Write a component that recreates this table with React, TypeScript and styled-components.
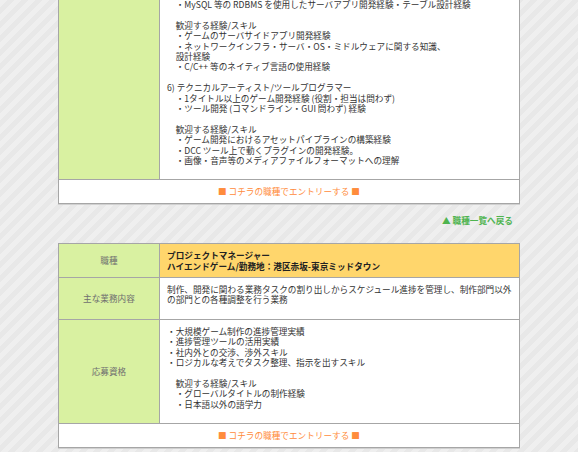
import React from "react";
import styled, { createGlobalStyle } from "styled-components";

const GlobalStyle = createGlobalStyle`
  html, body {
    margin: 0;
    padding: 0;
  }
  body {
    font-family: "Noto Sans CJK JP", "Noto Sans", sans-serif;
    font-size: 8.65px;
    line-height: 10.4px;
    color: #333;
    background-color: #ececec;
    background-image: repeating-linear-gradient(
      135deg,
      #efefef 0px,
      #efefef 5px,
      #e8e8e8 5px,
      #e8e8e8 10px
    );
    min-height: 452px;
    overflow: hidden;
  }
`;

const Page = styled.div`
  width: 462px;
  margin: -8px auto 0;
`;

const JobTable = styled.table`
  width: 462px;
  border-collapse: collapse;
  table-layout: fixed;
  background: #fff;
  border: 1px solid #a6a6a6;
  box-shadow: 0 1px 0 #d0d0d0;
`;

const LabelCol = styled.col`
  width: 101px;
`;

const LabelCell = styled.th`
  background: #d9f1a1;
  color: #707070;
  font-weight: normal;
  text-align: center;
  vertical-align: middle;
  border: 1px solid #a6a6a6;
  padding: 6px 4px;
`;

const ValueCell = styled.td<{ $head?: boolean }>`
  background: ${(p) => (p.$head ? "#ffd66c" : "#fff")};
  color: ${(p) => (p.$head ? "#222" : "#333")};
  font-weight: ${(p) => (p.$head ? "bold" : "normal")};
  border: 1px solid #a6a6a6;
  padding: ${(p) => (p.$head ? "6px 7px" : "6px 7px 14px")};
  vertical-align: top;
  text-align: left;
`;

const EntryCell = styled.td`
  border: 1px solid #a6a6a6;
  padding: 6px 7px;
  text-align: center;
  background: #fff;
`;

const EntryLink = styled.a`
  color: #ff8c3c;
  text-decoration: none;
  cursor: pointer;
`;

const Line = styled.div<{ $indent?: boolean }>`
  padding-left: ${(p) => (p.$indent ? "8.65px" : "0")};
  white-space: nowrap;
`;

const Blank = styled.div`
  height: 10.4px;
`;

const BackRow = styled.div`
  text-align: right;
  padding: 11px 7px 18px;
`;

const BackLink = styled.a`
  color: #4fb44f;
  font-weight: bold;
  text-decoration: none;
  cursor: pointer;
`;

type L = { t: string; i?: boolean } | null;

const firstLines: L[] = [
  { t: "・MySQL 等の RDBMS を使用したサーバアプリ開発経験・テーブル設計経験", i: true },
  null,
  { t: "歓迎する経験/スキル", i: true },
  { t: "・ゲームのサーバサイドアプリ開発経験", i: true },
  { t: "・ネットワークインフラ・サーバ・OS・ミドルウェアに関する知識、", i: true },
  { t: "設計経験", i: true },
  { t: "・C/C++ 等のネイティブ言語の使用経験", i: true },
  null,
  { t: "6) テクニカルアーティスト/ツールプログラマー" },
  { t: "・1タイトル以上のゲーム開発経験 (役割・担当は問わず)", i: true },
  { t: "・ツール開発 (コマンドライン・GUI 問わず) 経験", i: true },
  null,
  { t: "歓迎する経験/スキル", i: true },
  { t: "・ゲーム開発におけるアセットパイプラインの構築経験", i: true },
  { t: "・DCC ツール上で動くプラグインの開発経験。", i: true },
  { t: "・画像・音声等のメディアファイルフォーマットへの理解", i: true },
];

const pmLines: L[] = [
  { t: "・大規模ゲーム制作の進捗管理実績" },
  { t: "・進捗管理ツールの活用実績" },
  { t: "・社内外との交渉、渉外スキル" },
  { t: "・ロジカルな考えでタスク整理、指示を出すスキル" },
  null,
  { t: "歓迎する経験/スキル", i: true },
  { t: "・グローバルタイトルの制作経験", i: true },
  { t: "・日本語以外の語学力", i: true },
];

const Lines = ({ lines }: { lines: L[] }) => (
  <>
    {lines.map((l, k) =>
      l ? (
        <Line key={k} $indent={l.i}>
          {l.t}
        </Line>
      ) : (
        <Blank key={k} />
      )
    )}
  </>
);

const EntryRow = () => (
  <tr>
    <EntryCell colSpan={2}>
      <EntryLink>■ コチラの職種でエントリーする ■</EntryLink>
    </EntryCell>
  </tr>
);

const Cols = () => (
  <colgroup>
    <LabelCol />
    <col />
  </colgroup>
);

export default function App() {
  return (
    <>
      <GlobalStyle />
      <Page>
        <JobTable>
          <Cols />
          <tbody>
            <tr>
              <LabelCell aria-hidden="true" />
              <ValueCell>
                <Lines lines={firstLines} />
              </ValueCell>
            </tr>
            <EntryRow />
          </tbody>
        </JobTable>

        <BackRow>
          <BackLink>▲ 職種一覧へ戻る</BackLink>
        </BackRow>

        <JobTable>
          <Cols />
          <tbody>
            <tr>
              <LabelCell>職種</LabelCell>
              <ValueCell $head>
                <Line>プロジェクトマネージャー</Line>
                <Line>ハイエンドゲーム/勤務地：港区赤坂-東京ミッドタウン</Line>
              </ValueCell>
            </tr>
            <tr>
              <LabelCell>主な業務内容</LabelCell>
              <ValueCell>
                制作、開発に関わる業務タスクの割り出しからスケジュール進捗を管理し、制作部門以外の部門との各種調整を行う業務
              </ValueCell>
            </tr>
            <tr>
              <LabelCell>応募資格</LabelCell>
              <ValueCell>
                <Lines lines={pmLines} />
              </ValueCell>
            </tr>
            <EntryRow />
          </tbody>
        </JobTable>
      </Page>
    </>
  );
}
